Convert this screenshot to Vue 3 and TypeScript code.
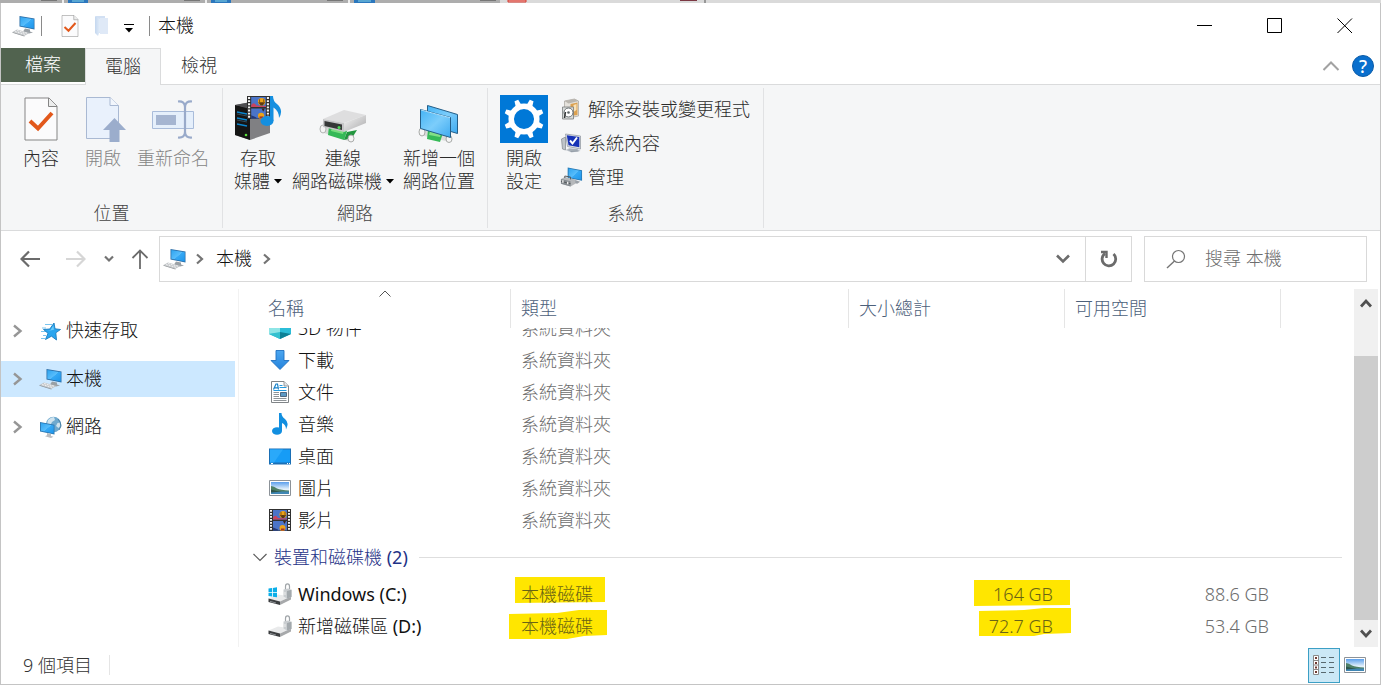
<script setup lang="ts">
import { onMounted, ref } from 'vue'

interface Entry {
  name: string
  letter?: string
  type: string
  icon: string
  total?: string
  free?: string
  mark?: 'flat' | 'slanted'
}

const folders: Entry[] = [
  { name: '3D 物件', type: '系統資料夾', icon: 'cube' },
  { name: '下載', type: '系統資料夾', icon: 'download' },
  { name: '文件', type: '系統資料夾', icon: 'document' },
  { name: '音樂', type: '系統資料夾', icon: 'music' },
  { name: '桌面', type: '系統資料夾', icon: 'desktop' },
  { name: '圖片', type: '系統資料夾', icon: 'picture' },
  { name: '影片', type: '系統資料夾', icon: 'film' },
]

const drives: Entry[] = [
  { name: '', letter: 'Windows (C:)', type: '本機磁碟', icon: 'drive-win', total: '164 GB', free: '88.6 GB', mark: 'flat' },
  { name: '新增磁碟區 ', letter: '(D:)', type: '本機磁碟', icon: 'drive', total: '72.7 GB', free: '53.4 GB', mark: 'slanted' },
]

const places = [
  { name: '快速存取', icon: 'star' },
  { name: '本機', icon: 'pc' },
  { name: '網路', icon: 'network' },
]

const current = ref('本機')
const query = ref('')
const list = ref<HTMLElement | null>(null)

onMounted(() => {
  if (list.value) list.value.scrollTop = 16
})
</script>

<template>
  <div class="screen">
    <svg class="defs" width="0" height="0" aria-hidden="true">
      <defs>
        <linearGradient id="g-screen" x1="0" y1="0" x2="1" y2="1">
          <stop offset="0" stop-color="#2fa4f0" />
          <stop offset=".5" stop-color="#58bdfb" />
          <stop offset=".52" stop-color="#36a9f5" />
          <stop offset="1" stop-color="#1e95ea" />
        </linearGradient>
        <linearGradient id="g-pane" x1="0" y1="0" x2="1" y2="1">
          <stop offset="0" stop-color="#45b4f5" />
          <stop offset=".5" stop-color="#7ccdfb" />
          <stop offset="1" stop-color="#3eaaf0" />
        </linearGradient>
        <linearGradient id="g-metal" x1="0" y1="0" x2="1" y2="1">
          <stop offset="0" stop-color="#f6f6f6" />
          <stop offset="1" stop-color="#a9a9ab" />
        </linearGradient>
        <linearGradient id="g-sky" x1="0" y1="0" x2="0" y2="1">
          <stop offset="0" stop-color="#5b9fec" />
          <stop offset=".6" stop-color="#e4f1fb" />
          <stop offset="1" stop-color="#e4f1fb" />
        </linearGradient>
        <linearGradient id="g-down" x1="0" y1="0" x2="0" y2="1">
          <stop offset="0" stop-color="#4ba6f0" />
          <stop offset="1" stop-color="#2583dc" />
        </linearGradient>
        <linearGradient id="g-folder" x1="0" y1="0" x2="1" y2="0">
          <stop offset="0" stop-color="#c4d7ef" />
          <stop offset="1" stop-color="#e3edf9" />
        </linearGradient>

        <symbol id="i-pc" viewBox="0 0 24 22">
          <path d="M7.500 1 22.500 3.500V14.500L7.500 11.500Z" fill="#2a6ea8" />
          <path d="M8.300 2 21.800 4.300V13.500L8.300 10.700Z" fill="url(#g-screen)" />
          <path d="M13 13.500 18 14.500 18 16.500 21 17.600 17 18.500 11 16.500Z" fill="#9aa0a5" />
          <path d="M.5 17 5 14.500 17.500 18 12.500 20.800Z" fill="#c3c6c9" />
          <path d="M3 16.600 13 19.300M5 15.500 15 18.200" stroke="#f5f5f5" stroke-width=".9" stroke-dasharray="2 .8" />
          <path d="M.5 17 12.500 20.800V21.400L.5 17.700Z" fill="#8b8f93" />
        </symbol>

        <symbol id="i-star" viewBox="0 0 24 22">
          <path d="M6 4.500H13M3 8H7M2 11.500H8M4 15.500H7M2 18.500H6" stroke="#79c4ee" stroke-width="1.100" />
          <path d="M15 3 16 8.800 21.500 9.500 16.800 12.800 17.500 20 12.500 16.200 6.500 19.500 9 13.300 4.500 9.500 10.800 9Z" fill="#29a5ef" stroke="#1b7dbf" stroke-width=".9" />
          <path d="M14.300 5.500 14.900 9.800 11.500 10.500 8 10.300 11.600 9.900Z" fill="#6ccbfa" />
        </symbol>

        <symbol id="i-network" viewBox="0 0 24 22">
          <circle cx="14.500" cy="8.500" r="7.700" fill="#6fa9ce" />
          <path d="M9 4Q12 1 15 1L16 4 13 6 12 8 8 8ZM18.500 7 21 6.500Q22 10 19.500 12L17 10Z" fill="#cfe3ee" />
          <path d="M19 3 21 6 22 10 20 14" stroke="#467fa6" fill="none" />
          <path d="M1 6 15.500 8.800V18.500L1 15.500Z" fill="#2a78b3" />
          <path d="M1.900 7 14.700 9.600V17.500L1.900 14.700Z" fill="url(#g-screen)" />
          <path d="M8 17 12 18V20L14.500 20.800 12 22 6 20.200 8 19.200Z" fill="#b9bdc1" />
        </symbol>

        <symbol id="i-cube" viewBox="0 0 24 22">
          <path d="M12 1 23 5V17L12 22 1 17V5Z" fill="#23b5cf" />
          <path d="M12 1 23 5 12 9 1 5Z" fill="#7be3ee" />
          <path d="M1 5 12 9V16L1 17Z" fill="#8ee5e6" />
          <path d="M23 5 12 9V16L23 17Z" fill="#2bbdd8" />
          <path d="M12 15 23 17 12 22Z" fill="#0d8095" />
          <path d="M12 15 1 17 12 22Z" fill="#34c1cf" />
        </symbol>

        <symbol id="i-download" viewBox="0 0 24 22">
          <path d="M8 1.500H16V11.500H21L12 20.500 3 11.500H8Z" fill="url(#g-down)" stroke="#1f6fc0" stroke-width=".9" />
        </symbol>

        <symbol id="i-document" viewBox="0 0 24 22">
          <path d="M3.500 .5H16L20.500 5V21.500H3.500Z" fill="#fff" stroke="#808487" />
          <path d="M16 .5V5H20.500" fill="#e1e5e8" stroke="#808487" stroke-width=".8" />
          <path d="M5.500 8.500 8 3H9.500L10.500 8.500M6.500 6.800H10" fill="none" stroke="#1680c8" stroke-width="1.200" />
          <path d="M11.500 4.500H14.500M11.500 6.500H18.500M5.500 9.500H18.500" stroke="#2499de" />
          <path d="M5.500 11.500H11M5.500 13.500H11M5.500 15.500H11M5.500 17.500H18.500M5.500 19.500H18.500" stroke="#8e9498" />
          <path d="M12.500 11.500H18.500V15.500H12.500Z" fill="#5d9ac5" stroke="#344f69" stroke-width=".8" />
        </symbol>

        <symbol id="i-music" viewBox="0 0 24 22">
          <ellipse cx="9" cy="18" rx="5" ry="3.800" fill="#128fe0" />
          <path d="M11 0H13.500Q13.500 3.500 17 6Q21.500 10 18 16.500Q18 11.500 14 10V18H11Z" fill="#128fe0" />
        </symbol>

        <symbol id="i-desktop" viewBox="0 0 24 22">
          <path d="M1 3.500H23V19.500H1Z" fill="#1a6fb5" />
          <path d="M2 4.500H22V17.500H2Z" fill="#169cf6" />
          <path d="M2 17.500V4.500H15L6 17.500Z" fill="#2aa9fa" />
          <path d="M3 18.500H5M19 18.500H20M21 18.500H22" stroke="#fff" />
        </symbol>

        <symbol id="i-picture" viewBox="0 0 24 22">
          <path d="M1.500 3.500H22.500V18.500H1.500Z" fill="#fff" stroke="#8c9298" />
          <path d="M3 5H21V17H3Z" fill="url(#g-sky)" />
          <path d="M3 9Q6 9 9 11.500 13 13 21 13.500V15H3Z" fill="#4f8067" />
          <path d="M3 14.500H21V17H3Z" fill="#3f86b4" />
          <path d="M3 12.500Q9 14.500 14 14.500L3 15.500Z" fill="#2f564c" />
        </symbol>

        <symbol id="i-film" viewBox="0 0 22 22">
          <path d="M0 0H22V22H0Z" fill="#303030" />
          <path d="M2 1V22M20 1V22" stroke="#f5f5f5" stroke-width="2" stroke-dasharray="1.800 1.200" />
          <path d="M4 1H18V10.500H4ZM4 12H18V21.500H4Z" fill="#4b74c8" />
          <path d="M4 8.500Q6.500 5 9 9L18 9.500V10.500H4Z" fill="#c8445e" />
          <circle cx="14" cy="5.500" r="3.500" fill="#eda318" />
          <path d="M10.700 6H17.300L15 9H13Z" fill="#5d3a12" />
          <path d="M12 3V7M16 3V7" stroke="#8d5a10" />
          <path d="M14 12H17L15.500 15Z" fill="#3d2415" />
          <circle cx="13.500" cy="19" r="3" fill="#eda318" />
          <path d="M12 19.500H15.500V21.500H12Z" fill="#a2362a" />
          <path d="M4 18.500 9 20.500V21.500H4Z" fill="#253978" />
        </symbol>

        <symbol id="i-drive" viewBox="0 0 24 22">
          <path d="M.5 15.500 10 11.500 23 13.500 12 18.500Z" fill="#e9eaeb" />
          <path d="M.5 15.500 12 18.500V22L.5 19Z" fill="#3c3e40" />
          <path d="M12 18.500 23 13.500V16.500L12 22Z" fill="#a7a9ab" />
          <path d="M2 18.300 8 20" stroke="#8b9094" />
          <path d="M17.500 7V3.500Q17.500 .8 19.500 .8T21.500 3.500V6" fill="none" stroke="#a0a5a9" stroke-width="1.200" />
          <path d="M15.500 6.500 20 5.500 23.500 6.800V14L19 15.500 15.500 13.500Z" fill="#c9cdd0" />
          <path d="M19 8 23.500 6.800V14L19 15.500Z" fill="#a3a9ad" />
          <path d="M17 9V12" stroke="#eee" />
        </symbol>
        <symbol id="i-drive-win" viewBox="0 0 24 22">
          <use href="#i-drive" width="24" height="22" />
          <path d="M.5 5.500 4 5V9H.5ZM4.800 4.900 9 4.300V9H4.800ZM.5 9.800H4V13.600L.5 13.100ZM4.800 9.800H9V14.300L4.800 13.700Z" fill="#0baee8" />
        </symbol>

        <symbol id="i-sheet" viewBox="0 0 34 44">
          <path d="M1 1H25L33 9V43H1Z" fill="#fbfbfc" stroke="#858585" />
          <path d="M24.500 1V9.500H33" fill="#eceded" stroke="#858585" />
          <path d="M6 24 14 31.500 28 16" fill="none" stroke="#e2581b" stroke-width="4" />
        </symbol>
      </defs>
    </svg>

    <svg class="behind" height="3" aria-hidden="true">
      <rect width="500" height="3" fill="#adadad" />
      <rect x="500" width="100%" height="3" fill="#dadada" />
      <path d="M63 0V3M206 0V3M349 0V3" stroke="#eee" stroke-width="2" />
      <path d="M68 0H88V3H68ZM211 0H231V3H211ZM354 0H375V3H354Z" fill="#2b77bd" />
      <path d="M72 0H84V2H72ZM215 0H227V2H215ZM358 0H371V2H358Z" fill="#58a6d2" />
      <path d="M508 0H526V2H508Z" fill="#f2b2ac" stroke="#d63a30" />
      <path d="M41 0H57V1H41ZM184 0H200V1H184ZM327 0H343V1H327ZM480 0H496V1H480Z" fill="#777" />
      <path d="M680 0H697V1H680Z" fill="#7c3843" />
      <path d="M705 0V3" stroke="#555" />
    </svg>

    <main class="window">
      <header class="titlebar">
        <svg class="app-icon" width="24" height="22"><use href="#i-pc" /></svg>
        <span class="bar"></span>
        <button class="quick" aria-label="內容">
          <svg width="18" height="22"><use href="#i-sheet" /></svg>
        </button>
        <button class="quick" aria-label="新增資料夾">
          <svg width="16" height="22" viewBox="0 0 16 22">
            <path d="M2 1H11V18H2Z" fill="#d2e0f3" />
            <path d="M6 3H14V19H6Z" fill="#dfe9f7" />
            <path d="M1 1 6 4V16L4 21 1 18Z" fill="url(#g-folder)" />
          </svg>
        </button>
        <button class="quick more" aria-label="自訂快速存取工具列">
          <svg width="10" height="9" viewBox="0 0 10 9"><path d="M0 .5H10" stroke="#000" /><path d="M1 4H9L5 8.500Z" /></svg>
        </button>
        <span class="bar"></span>
        <h1>本機</h1>
        <div class="controls">
          <button aria-label="最小化"><svg width="16" height="16"><path d="M0 7.500H15" stroke="#000" /></svg></button>
          <button aria-label="最大化"><svg width="16" height="16"><path d="M.5 .5H14.500V14.500H.5Z" fill="none" stroke="#000" /></svg></button>
          <button aria-label="關閉"><svg width="16" height="16"><path d="M.5 .5 15 15M15 .5 .5 15" stroke="#000" /></svg></button>
        </div>
      </header>

      <nav class="tabs">
        <button class="tab file">檔案</button>
        <button class="tab active">電腦</button>
        <button class="tab">檢視</button>
        <div class="tab-tools">
          <button aria-label="最小化功能區"><svg width="18" height="12" viewBox="0 0 18 12"><path d="M1.500 10 9 2.500 16.500 10" fill="none" stroke="#a2a2a2" stroke-width="2" /></svg></button>
          <button class="help" aria-label="說明">?</button>
        </div>
      </nav>

      <section class="ribbon">
        <div class="group">
          <div class="tools places">
            <button class="tool">
              <span class="pic"><svg width="34" height="44"><use href="#i-sheet" /></svg></span>
              <span>內容</span>
            </button>
            <button class="tool" disabled>
              <span class="pic">
                <svg class="open-icon" width="42" height="46" viewBox="0 0 42 46">
                  <path d="M1.500 1.500H25L33.500 9.500V42.500H1.500Z" fill="#e9f1fc" stroke="#a9b9d3" />
                  <path d="M25 1.500V9.500H33.500" fill="#f2f6fc" stroke="#a9b9d3" />
                  <path d="M29.500 22 41 34H34.500V46H24.500V34H18Z" fill="#9badcc" />
                </svg>
              </span>
              <span>開啟</span>
            </button>
            <button class="tool" disabled>
              <span class="pic">
                <svg width="44" height="44" viewBox="0 0 44 44">
                  <path d="M1.500 14.500H42.500V31.500H1.500Z" fill="#e5effb" stroke="#a9bcda" />
                  <path d="M5 18H25V28H5Z" fill="#a5b5d1" />
                  <path d="M27 4.500Q34 4 34 10V35Q34 41 27 40.500M41 4.500Q34 4 34 10M34 35Q34 41 41 40.500" fill="none" stroke="#99aaca" stroke-width="2.200" />
                </svg>
              </span>
              <span>重新命名</span>
            </button>
          </div>
          <h2>位置</h2>
        </div>

        <div class="group">
          <div class="tools net">
            <button class="tool">
              <span class="pic">
                <svg width="48" height="48" viewBox="0 0 48 48">
                  <path d="M1 10 17 7 36 12V38L16 45 1 40Z" fill="#808083" />
                  <path d="M1 10 16 13V45L1 40Z" fill="#151515" />
                  <path d="M1 10 17 7 36 12 16 14Z" fill="#4d4d50" />
                  <path d="M3 17 13 19M3 23 13 25M3 29 13 31" stroke="#0b85cd" stroke-width="1.500" />
                  <path d="M3 19 13 21M3 25 13 27" stroke="#344b58" />
                  <circle cx="12" cy="40" r="1.300" fill="#59e03b" />
                  <svg x="13" y="1" width="23" height="23" viewBox="0 0 22 22"><use href="#i-film" /></svg>
                  <ellipse cx="33" cy="26" rx="6.500" ry="5" fill="#148fe0" />
                  <path d="M36 1H39Q39 6 43 9Q50 15 45 23Q45 16 39.500 12.500V26H36Z" fill="#148fe0" />
                </svg>
              </span>
              <span>存取</span>
              <span>媒體<svg class="caret" width="8" height="5"><path d="M0 0H8L4 4.500Z" /></svg></span>
            </button>
            <button class="tool">
              <span class="pic low">
                <svg width="48" height="34" viewBox="0 0 48 34">
                  <path d="M4 17 34 27 32 33 2 23Z" fill="#d7d9d8" />
                  <ellipse cx="4" cy="20" rx="3" ry="4" fill="#f5f5f5" stroke="#b1b4b2" />
                  <path d="M10 17 28 22 25 31 9 26Z" fill="#35b957" />
                  <path d="M13 18 25 21 24 25 12 22Z" fill="#7bdd80" />
                  <path d="M28 23 38 21 33 29 25 31Z" fill="#22963f" />
                  <ellipse cx="32" cy="29.500" rx="3" ry="3.500" fill="#f5f5f5" stroke="#a8aaa9" />
                  <path d="M4 10 25 1 47 6 25 14Z" fill="#dededf" />
                  <path d="M4 10 25 14V23L4 18Z" fill="#c5c6c7" />
                  <path d="M5.500 12 23 15.500V21L5.500 17Z" fill="#363838" />
                  <path d="M25 14 47 6V14L25 23Z" fill="url(#g-metal)" />
                  <circle cx="20" cy="18.500" r="1.500" fill="#47db55" />
                </svg>
              </span>
              <span>連線</span>
              <span>網路磁碟機<svg class="caret" width="8" height="5"><path d="M0 0H8L4 4.500Z" /></svg></span>
            </button>
            <button class="tool">
              <span class="pic low">
                <svg width="42" height="38" viewBox="0 0 42 38">
                  <path d="M2 24 32 31V37L2 30Z" fill="#dadcdb" />
                  <ellipse cx="4" cy="27" rx="3" ry="4" fill="#f6f6f6" stroke="#a7aaa8" />
                  <path d="M10 25 25 28 22 37 9 34Z" fill="#36ba58" />
                  <path d="M12 26 23 28 22 32 11 30Z" fill="#83df86" />
                  <ellipse cx="31" cy="34" rx="3" ry="3.500" fill="#f6f6f6" stroke="#a7aaa8" />
                  <path d="M9.500 .5 39.500 9.500V28.500L9.500 19.500Z" fill="url(#g-pane)" stroke="#245e88" />
                  <path d="M2.500 4.500 32.500 12.500V32.500L2.500 23.500Z" fill="url(#g-pane)" stroke="#245e88" />
                  <path d="M3 5 32 12.700" stroke="#aee2ff" />
                </svg>
              </span>
              <span>新增一個</span>
              <span>網路位置</span>
            </button>
          </div>
          <h2>網路</h2>
        </div>

        <div class="group">
          <div class="tools system">
            <button class="tool">
              <span class="pic">
                <svg width="48" height="48" viewBox="0 0 48 48">
                  <path d="M0 0H48V48H0Z" fill="#0078d7" />
                  <circle cx="24" cy="24" r="12.800" fill="none" stroke="#fff" stroke-width="5.500" />
                  <g fill="#fff">
                    <path id="tooth" d="M21 10 22 4H26L27 10Z" transform="rotate(22.500 24 24)" />
                    <use v-for="n in 7" :key="n" href="#tooth" :transform="`rotate(${n * 45} 24 24)`" />
                  </g>
                </svg>
              </span>
              <span>開啟</span>
              <span>設定</span>
            </button>
            <div class="small-tools">
              <button>
                <svg width="22" height="22" viewBox="0 0 22 22">
                  <path d="M4 3 14 1 18 3V18L8 20 4 18Z" fill="#e5e2dc" stroke="#a6a39d" stroke-width=".7" />
                  <path d="M4 3 14 1 18 3 8 5.500Z" fill="#b9b5ae" />
                  <path d="M10 6 17 4.500V17L10 18Z" fill="#dca150" />
                  <path d="M13 7 16 6V12L13 14Z" fill="#f8e2b8" />
                  <path d="M2 9H13V21H2Z" fill="#d9dcdb" stroke="#787c7c" stroke-width=".8" />
                  <circle cx="8" cy="14.500" r="4.500" fill="#fff" stroke="#696f71" />
                  <circle cx="8" cy="14.500" r="1.300" fill="#5a6264" />
                  <path d="M5 14 4 20" stroke="#343737" stroke-width="1.500" />
                </svg>
                <span>解除安裝或變更程式</span>
              </button>
              <button>
                <svg width="22" height="22" viewBox="0 0 22 22">
                  <path d="M1 7 5 5V18L2 17Z" fill="#bfc4c9" stroke="#7f868d" stroke-width=".7" />
                  <path d="M5 2 20 4V17L7 14.500Z" fill="#dfe3e8" stroke="#8b929c" stroke-width=".7" />
                  <path d="M6.300 3.300 18.800 5V15.300L8 13.300Z" fill="#1732b6" />
                  <path d="M9.500 8.500 12 11.500 16.500 5.500" stroke="#fff" stroke-width="2" fill="none" />
                  <path d="M9 16 17 17 20 19 11 20.500 5 18Z" fill="#c0c6cd" />
                  <path d="M8 18 17 18M10 19.500 18 19" stroke="#858f9b" stroke-width=".8" />
                </svg>
                <span>系統內容</span>
              </button>
              <button>
                <svg width="24" height="22" viewBox="0 0 24 22">
                  <path d="M8 1 23 4V15L8 12Z" fill="#2679b4" />
                  <path d="M9 2.200 22.200 4.700V13.900L9 11.200Z" fill="url(#g-screen)" />
                  <path d="M16 14 21 16 18 18 13 17Z" fill="#9aa1a8" />
                  <path d="M1 13 5 11 16 13.500V18L11 21 1 18Z" fill="#b5b8bb" />
                  <path d="M1 13 11 15.500V21L1 18Z" fill="#858b90" />
                  <path d="M5 12V10L11 11V13.500M1 15.500 11 18" stroke="#55595c" fill="none" />
                  <path d="M3 14.500V17M8 16V18.500" stroke="#eee" stroke-width="1.500" />
                </svg>
                <span>管理</span>
              </button>
            </div>
          </div>
          <h2>系統</h2>
        </div>
      </section>

      <section class="location">
        <div class="history">
          <button aria-label="上一頁"><svg width="20" height="18" viewBox="0 0 20 18"><path d="M20 9H2M9 1.500 1.500 9 9 16.500" fill="none" stroke="#6b6b6b" stroke-width="2.200" /></svg></button>
          <button disabled aria-label="下一頁"><svg width="20" height="18" viewBox="0 0 20 18"><path d="M0 9H18M11 1.500 18.500 9 11 16.500" fill="none" stroke="#d6d6d6" stroke-width="2.200" /></svg></button>
          <button aria-label="最近的位置"><svg width="10" height="8" viewBox="0 0 10 8"><path d="M1 1.500 5 5.500 9 1.500" fill="none" stroke="#737373" stroke-width="2.200" /></svg></button>
          <button aria-label="上移一層"><svg width="18" height="20" viewBox="0 0 18 20"><path d="M9 20V2M1.500 9 9 1.500 16.500 9" fill="none" stroke="#6b6b6b" stroke-width="1.800" /></svg></button>
        </div>
        <div class="address">
          <svg width="24" height="22"><use href="#i-pc" /></svg>
          <svg class="arrow" width="8" height="12" viewBox="0 0 8 12"><path d="M1 1.500 6 6 1 10.500" /></svg>
          <button class="crumb">本機</button>
          <svg class="arrow" width="8" height="12" viewBox="0 0 8 12"><path d="M1 1.500 6 6 1 10.500" /></svg>
          <button class="drop" aria-label="先前的位置"><svg width="14" height="10" viewBox="0 0 14 10"><path d="M1 1.500 7 7.500 13 1.500" fill="none" stroke="#6c6c6c" stroke-width="2.600" /></svg></button>
          <button class="reload" aria-label="重新整理">
            <svg width="18" height="18" viewBox="0 0 18 18"><path d="M13.500 4A6.800 6.800 0 1 1 5 3.500" fill="none" stroke="#6b6b6b" stroke-width="2.800" /><path d="M1 2H6.500V8" fill="none" stroke="#6b6b6b" stroke-width="2.400" /></svg>
          </button>
        </div>
        <label class="search">
          <svg width="20" height="20" viewBox="0 0 20 20"><circle cx="12.500" cy="7.500" r="6" fill="none" stroke="#757575" stroke-width="1.200" /><path d="M8.500 12 1 19" stroke="#757575" stroke-width="1.400" /></svg>
          <input v-model="query" type="text" placeholder="搜尋 本機" aria-label="搜尋 本機" />
        </label>
      </section>

      <section class="content">
        <nav class="sidebar">
          <a v-for="place in places" :key="place.name" href="#" :class="{ selected: place.name === current }" @click.prevent="current = place.name">
            <svg class="expand" width="12" height="14" viewBox="0 0 12 14"><path d="M2 1.500 8.500 7 2 12.500" fill="none" stroke="#969696" stroke-width="2.400" /></svg>
            <svg width="24" height="22"><use :href="`#i-${place.icon}`" /></svg>
            <span>{{ place.name }}</span>
          </a>
        </nav>

        <div ref="list" class="list">
          <table>
            <colgroup><col class="c-name" /><col class="c-type" /><col class="c-size" /><col class="c-free" /><col /></colgroup>
            <thead>
              <tr>
                <th scope="col">名稱<svg class="sort" width="12" height="7" viewBox="0 0 12 7"><path d="M.5 6.500 6 1 11.500 6.500" fill="none" stroke="#555" /></svg></th>
                <th scope="col">類型</th>
                <th scope="col">大小總計</th>
                <th scope="col">可用空間</th>
                <td></td>
              </tr>
            </thead>
            <tbody>
              <tr v-for="f in folders" :key="f.name">
                <td><div class="name"><svg width="24" height="22"><use :href="`#i-${f.icon}`" /></svg>{{ f.name }}</div></td>
                <td class="muted">{{ f.type }}</td>
                <td></td><td></td><td></td>
              </tr>
            </tbody>
            <tbody>
              <tr class="section">
                <th colspan="5" scope="colgroup">
                  <div class="section-title">
                    <svg width="14" height="9" viewBox="0 0 14 9"><path d="M.5 1 7 7.500 13.500 1" fill="none" stroke="#5c5c5c" stroke-width="1.200" /></svg>
                    <span>裝置和磁碟機 <b>(2)</b></span>
                    <i></i>
                  </div>
                </th>
              </tr>
              <tr v-for="d in drives" :key="d.icon">
                <td><div class="name"><svg width="24" height="22"><use :href="`#i-${d.icon}`" /></svg><span>{{ d.name }}<b>{{ d.letter }}</b></span></div></td>
                <td class="muted">
                  <span class="marked" :class="d.mark">
                    <svg v-if="d.mark === 'flat'" class="marker" width="90" height="26"><path d="M0 0H90V25L0 26Z" /></svg>
                    <svg v-else class="marker" width="98" height="29"><path d="M0 4 48 3 70 0H98V25L75 26 58 29H0Z" /></svg>
                    <span>{{ d.type }}</span>
                  </span>
                </td>
                <td class="muted amount">
                  <span class="marked" :class="d.mark">
                    <svg v-if="d.mark === 'flat'" class="marker" width="96" height="26"><path d="M0 0H96V25L0 26Z" /></svg>
                    <svg v-else class="marker" width="92" height="28"><path d="M0 3 45 2 65 0H92V25L65 26 55 28H0Z" /></svg>
                    <span>{{ d.total }}</span>
                  </span>
                </td>
                <td class="muted amount">{{ d.free }}</td>
                <td></td>
              </tr>
            </tbody>
          </table>
        </div>

        <div class="scrollbar">
          <button aria-label="向上捲動"><svg width="12" height="10" viewBox="0 0 12 10"><path d="M1 8.500 6 3 11 8.500" fill="none" stroke="#505050" stroke-width="2.800" /></svg></button>
          <div class="track"><div class="thumb"></div></div>
          <button aria-label="向下捲動"><svg width="12" height="10" viewBox="0 0 12 10"><path d="M1 1.500 6 7 11 1.500" fill="none" stroke="#505050" stroke-width="2.800" /></svg></button>
        </div>
      </section>

      <footer class="status">
        <span class="count">9 個項目</span>
        <div class="views">
          <button class="on" aria-label="詳細資料">
            <svg width="22" height="22" viewBox="0 0 22 22">
              <path d="M.5 1.500H5.500V20.500H.5ZM.5 6.500H5.500M.5 11H5.500M.5 15.500H5.500" fill="#fff" stroke="#898989" />
              <path d="M3 3V5M3 8V10M3 12.500V14.500M3 17V19" stroke="#703a32" stroke-width="2" />
              <path d="M8 3.500H13M16 3.500H21M8 8.500H13M16 8.500H21M8 13.500H13M16 13.500H21M8 18.500H13M16 18.500H21" stroke="#58696f" />
            </svg>
          </button>
          <button aria-label="大圖示"><svg width="24" height="22"><use href="#i-picture" /></svg></button>
        </div>
      </footer>
    </main>
  </div>
</template>

<style>
body {
  margin: 0;
  background: #fff;
}
</style>

<style scoped>
.screen {
  display: flex;
  flex-direction: column;
  height: 100vh;
  font-family: 'Noto Sans', 'Noto Sans CJK TC', sans-serif;
  font-size: 18px;
  font-weight: 300;
  line-height: 24px;
  color: #111;
}
* {
  box-sizing: border-box;
}
button {
  display: inline-flex;
  align-items: center;
  justify-content: center;
  margin: 0;
  padding: 0;
  border: 0;
  background: none;
  font: inherit;
  color: inherit;
}
svg {
  flex: none;
}
b {
  font-weight: 400;
}
.defs {
  position: absolute;
}
.behind {
  display: block;
  width: 100%;
}
.window {
  display: flex;
  flex: 1;
  flex-direction: column;
  min-height: 0;
  border: 1px solid #c4c4c4;
  border-top: 0;
  background: #fff;
}

.titlebar {
  display: flex;
  align-items: center;
  height: 45px;
  padding-left: 11px;
}
.titlebar .bar {
  width: 1px;
  height: 20px;
  margin-left: 5px;
  background: #8a8a8a;
}
.quick {
  margin-left: 15px;
}
.bar + .quick {
  margin-left: 19px;
}
.quick.more {
  margin-right: 10px;
  margin-left: 14px;
  padding-top: 5px;
}
h1 {
  margin: 0 0 0 8px;
  padding-bottom: 2px;
  font: inherit;
}
.controls {
  display: flex;
  margin-left: auto;
}
.controls button {
  width: 70px;
  height: 45px;
}

.tabs {
  display: flex;
  height: 37px;
  border-bottom: 1px solid #dadbdc;
}
.tab {
  width: 76px;
  height: 36px;
  padding-bottom: 2px;
  color: #333;
}
.tab.file {
  width: 84px;
  height: 34px;
  background: #51634f;
  color: #fff;
}
.tab.active {
  height: 37px;
  border: 1px solid #dadbdc;
  border-bottom: 0;
  background: #f5f6f7;
}
.tab-tools {
  display: flex;
  align-items: center;
  gap: 12px;
  margin-left: auto;
  padding-right: 6px;
}
.help {
  width: 22px;
  height: 22px;
  border: 1px solid #0b5ca8;
  border-radius: 50%;
  background: #0a6fcd;
  color: #fff;
  font-weight: 500;
}

.ribbon {
  display: flex;
  padding: 3px 0 2px;
  border-bottom: 1px solid #dadbdc;
  background: #f5f6f7;
}
.group {
  display: flex;
  flex-direction: column;
  height: 140px;
  padding-top: 7px;
  border-right: 1px solid #e1e2e4;
}
.tools {
  display: flex;
  align-items: flex-start;
  height: 98px;
}
.places {
  padding: 0 10px 0 9px;
}
.net {
  gap: 3px;
  padding: 0 9px 0 7px;
}
.system {
  gap: 8px;
  padding: 0 13px 0 8px;
}
.tool {
  flex-direction: column;
  min-width: 56px;
  padding: 0 3px;
  line-height: 23px;
  color: #2b2b2b;
}
.places .tool {
  min-width: 62px;
}
.tool:disabled {
  color: #858585;
}
.pic {
  display: flex;
  align-items: center;
  justify-content: center;
  height: 48px;
  margin-bottom: 4px;
}
.pic.low {
  align-items: flex-end;
}
.open-icon {
  margin-left: 6px;
}
.caret {
  margin-left: 4px;
  vertical-align: 4px;
}
.small-tools {
  display: flex;
  flex-direction: column;
}
.small-tools button {
  justify-content: flex-start;
  gap: 5px;
  height: 34px;
  padding-bottom: 6px;
  color: #2b2b2b;
}
.small-tools svg {
  width: 23px;
}
h2 {
  margin: 8px 0 0;
  font: inherit;
  line-height: 24px;
  text-align: center;
  color: #444;
}

.location {
  display: flex;
  height: 58px;
  padding: 5px 13px 7px 0;
}
.history {
  display: flex;
  align-items: center;
  width: 158px;
  padding-left: 19px;
}
.history button {
  margin-right: 26px;
}
.history button:nth-child(2) {
  margin-right: 18px;
}
.history button:nth-child(3) {
  margin-right: 17px;
}
.history button:nth-child(4) {
  margin: 0;
}
.address {
  display: flex;
  flex: 1;
  align-items: center;
  border: 1px solid #d9d9d9;
  padding-left: 3px;
}
.crumb {
  padding-bottom: 2px;
}
.arrow {
  margin: 0 12px 0 9px;
  fill: none;
  stroke: #747474;
  stroke-width: 2.200;
}
.crumb + .arrow {
  margin-left: 11px;
}
.drop {
  width: 44px;
  margin-left: auto;
}
.reload {
  align-self: stretch;
  width: 46px;
  border-left: 1px solid #d9d9d9;
}
.search {
  display: flex;
  align-items: center;
  width: 223px;
  margin-left: 12px;
  padding-left: 21px;
  border: 1px solid #d9d9d9;
}
.search input {
  flex: 1;
  min-width: 0;
  margin-left: 19px;
  padding: 0 0 2px;
  border: 0;
  outline: 0;
  font: inherit;
}
.search input::placeholder {
  color: #6d6d6d;
  opacity: 1;
}

.content {
  display: flex;
  flex: 1;
  min-height: 0;
}
.sidebar {
  display: flex;
  flex-direction: column;
  gap: 12px;
  width: 238px;
  padding: 24px 3px 0 0;
  border-right: 1px solid #f2f2f2;
}
.sidebar a {
  display: flex;
  align-items: center;
  height: 36px;
  padding-left: 11px;
  color: #111;
  text-decoration: none;
}
.sidebar a.selected {
  background: #cce8ff;
}
.sidebar .expand {
  margin-right: 15px;
}
.sidebar span {
  margin-left: 3px;
  padding-bottom: 2px;
}
.list {
  flex: 1;
  overflow: hidden;
}
table {
  width: 100%;
  margin-bottom: 48px;
  border-collapse: separate;
  border-spacing: 0;
  table-layout: fixed;
}
.c-name {
  width: 272px;
}
.c-type {
  width: 338px;
}
.c-size,
.c-free {
  width: 216px;
}
thead th,
thead td {
  position: sticky;
  z-index: 1;
  top: 0;
  height: 39px;
  padding: 0 0 2px 10px;
  border-right: 1px solid #e5e5e5;
  background: #fff;
  color: #4c607a;
  font-weight: inherit;
  text-align: left;
}
thead td {
  border: 0;
}
thead th:first-child {
  padding-left: 29px;
}
.sort {
  position: absolute;
  top: 1px;
  left: 140px;
}
tbody td {
  height: 32px;
  padding: 0 0 0 10px;
}
tbody td:first-child {
  padding-left: 29px;
}
.name {
  display: flex;
  align-items: center;
  gap: 6px;
}
.muted {
  color: #6d6d6d;
}
tbody .amount {
  padding-right: 12px;
  text-align: right;
}
.section th {
  height: 42px;
  padding: 0 12px 0 14px;
  color: #1e3287;
  font-weight: inherit;
}
.section-title {
  display: flex;
  align-items: center;
}
.section-title span {
  margin: 0 11px 0 7px;
}
.section-title i {
  flex: 1;
  height: 1px;
  background: #dedede;
}
.marked {
  position: relative;
  color: #6a6415;
}
.marked > span {
  position: relative;
}
.marker {
  position: absolute;
  top: -5px;
  left: -6px;
  fill: #ffe600;
}
.slanted .marker {
  top: -4px;
  left: -12px;
}
.amount .marker {
  top: -2px;
  right: -17px;
  left: auto;
}
.amount .slanted .marker {
  top: -6px;
  right: -18px;
}
.scrollbar {
  display: flex;
  flex-direction: column;
  width: 24px;
  margin-right: 2px;
  background: #f0f0f0;
}
.scrollbar button {
  height: 27px;
}
.track {
  display: flex;
  flex: 1;
  flex-direction: column;
  justify-content: flex-end;
}
.thumb {
  height: 87%;
  background: #cdcdcd;
}

.status {
  display: flex;
  align-items: center;
  justify-content: space-between;
  height: 37px;
  padding: 0 13px 1px 22px;
}
.count {
  padding-right: 17px;
  border-right: 1px solid #e5e5e5;
  color: #333;
  line-height: 20px;
}
.views {
  display: flex;
  gap: 3px;
}
.views .on {
  width: 32px;
  height: 35px;
  border: 1px solid #3c9fc5;
  background: #cbe8f6;
}
</style>
